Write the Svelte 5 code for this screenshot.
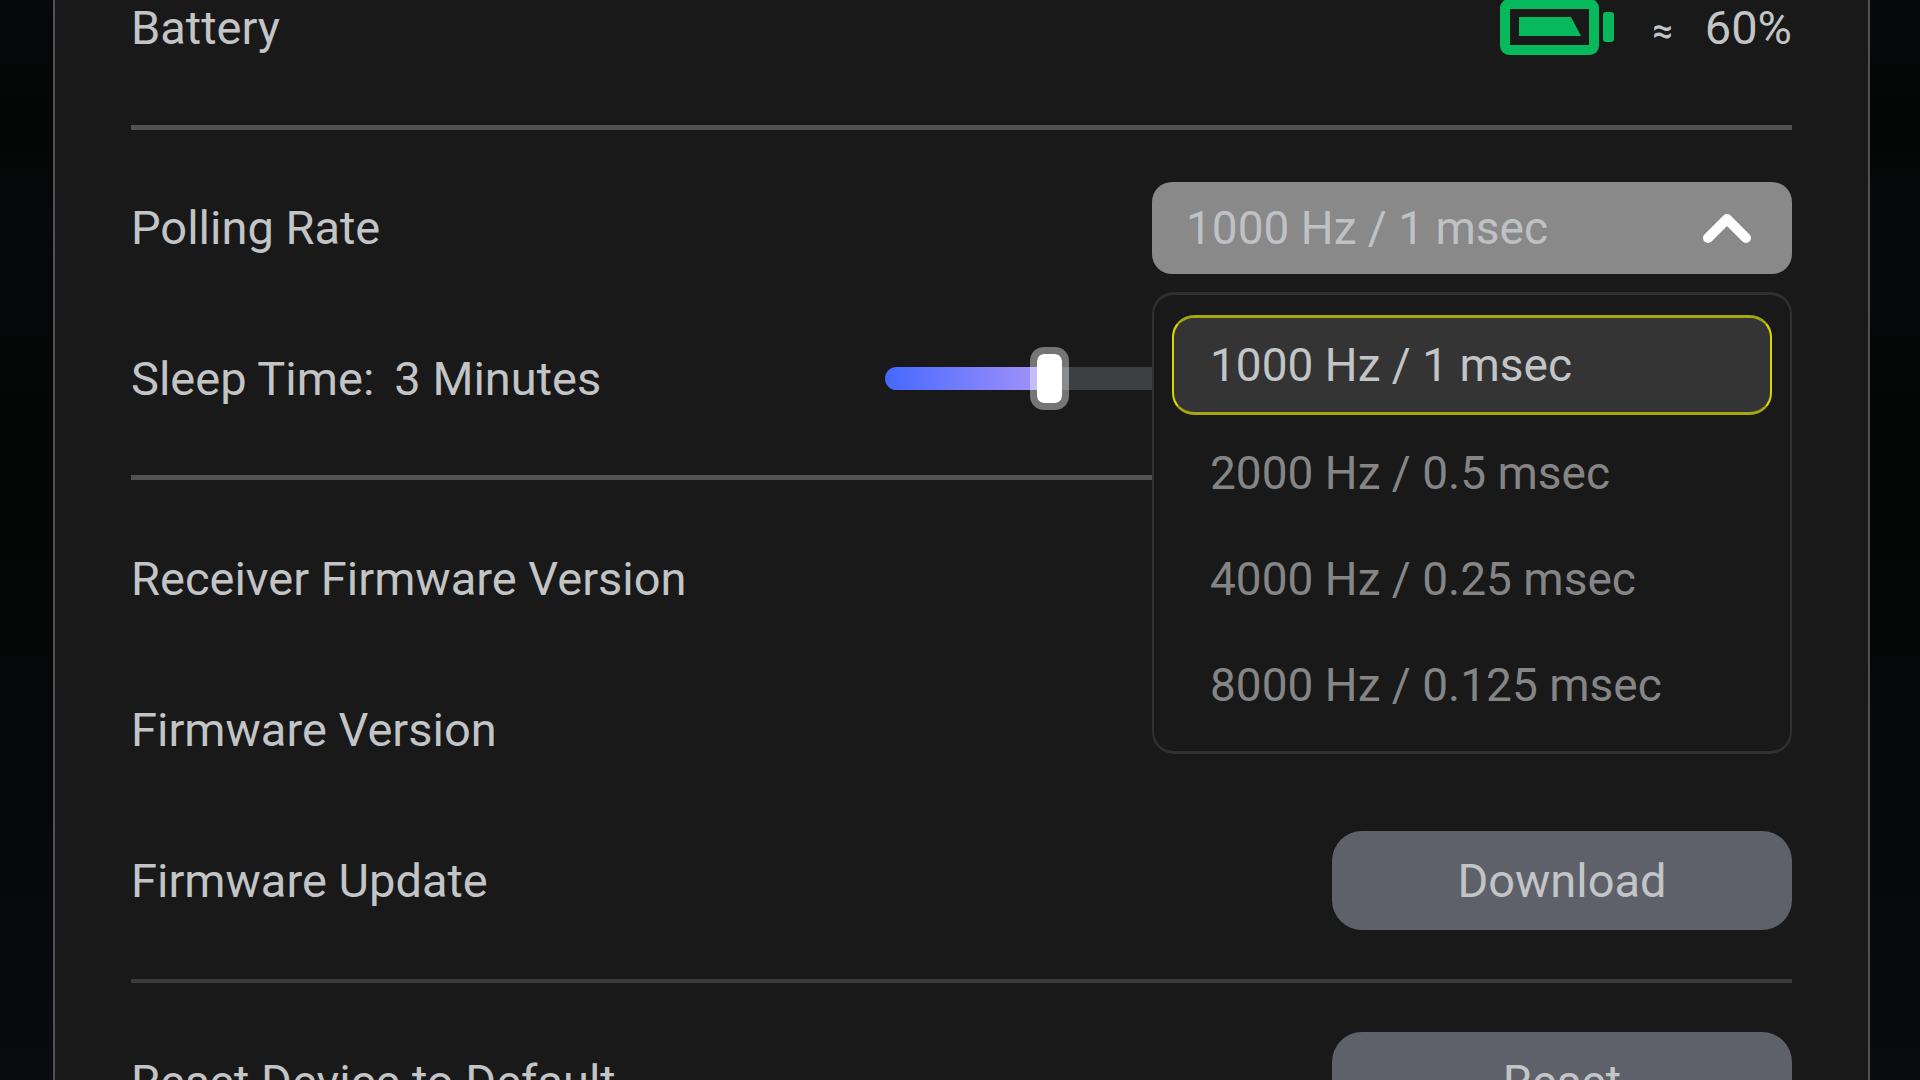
<script lang="ts">
	const pollingRates = [
		{ value: 1000, label: '1000 Hz / 1 msec' },
		{ value: 2000, label: '2000 Hz / 0.5 msec' },
		{ value: 4000, label: '4000 Hz / 0.25 msec' },
		{ value: 8000, label: '8000 Hz / 0.125 msec' }
	];

	const SLEEP_MIN = 1;
	const SLEEP_MAX = 13;
	const THUMB_WIDTH = 39;

	let batteryLevel = $state(60);
	let pollingRate = $state(1000);
	let menuOpen = $state(true);
	let sleepMinutes = $state(3);

	// the filled part of the track ends under the middle of the thumb
	let sleepRatio = $derived((sleepMinutes - SLEEP_MIN) / (SLEEP_MAX - SLEEP_MIN));
	let sleepFill = $derived(
		`calc(${THUMB_WIDTH / 2}px + (100% - ${THUMB_WIDTH}px) * ${sleepRatio})`
	);

	function toggleMenu(event: MouseEvent) {
		event.preventDefault();
		menuOpen = !menuOpen;
	}

	function chooseRate(value: number) {
		pollingRate = value;
		menuOpen = false;
	}
</script>

<div class="page">
	<main class="panel">
		<section class="first">
			<div class="row">
				<span>Battery</span>
				<div class="battery">
					<svg width="114" height="57" viewBox="0 0 114 57" aria-hidden="true">
						<rect x="5" y="5" width="89" height="46" rx="4" fill="none" stroke="#05b95c" stroke-width="10" />
						<path d="M19 18H71L81 37H19Z" fill="#05b95c" />
						<rect x="103" y="13" width="11" height="30" rx="3" fill="#05b95c" />
					</svg>
					<span class="approx">≈</span>
					<span>{batteryLevel}%</span>
				</div>
			</div>
		</section>

		<hr />

		<section class="power">
			<div class="row">
				<label for="pollingRate">Polling Rate</label>
				<div class="dropdown">
					<select id="pollingRate" bind:value={pollingRate} onmousedown={toggleMenu}>
						{#each pollingRates as rate}
							<option value={rate.value}>{rate.label}</option>
						{/each}
					</select>
					<svg class="chevron" class:closed={!menuOpen} width="50" height="30" viewBox="0 0 50 30" aria-hidden="true">
						<path d="M6 25L25 6L44 25" fill="none" stroke="#fff" stroke-width="10" stroke-linecap="round" stroke-linejoin="round" />
					</svg>
					{#if menuOpen}
						<div class="menu" role="listbox" aria-label="Polling Rate">
							{#each pollingRates as rate}
								<button
									type="button"
									role="option"
									class="choice"
									class:selected={rate.value === pollingRate}
									aria-selected={rate.value === pollingRate}
									onclick={() => chooseRate(rate.value)}
								>
									{rate.label}
								</button>
							{/each}
						</div>
					{/if}
				</div>
			</div>
			<div class="row">
				<label class="sleep" for="sleepTime">
					<span>Sleep Time:</span>
					<span>{sleepMinutes} Minutes</span>
				</label>
				<input
					type="range"
					id="sleepTime"
					min={SLEEP_MIN}
					max={SLEEP_MAX}
					bind:value={sleepMinutes}
					style="--fill: {sleepFill}"
				/>
			</div>
		</section>

		<hr />

		<section>
			<div class="row">
				<span>Receiver Firmware Version</span>
			</div>
			<div class="row">
				<span>Firmware Version</span>
			</div>
			<div class="row">
				<span>Firmware Update</span>
				<button type="button" class="action">Download</button>
			</div>
		</section>

		<hr class="dim" />

		<section>
			<div class="row">
				<span>Reset Device to Default</span>
				<button type="button" class="action">Reset</button>
			</div>
		</section>
	</main>
</div>

<style>
	:global(body) {
		margin: 0;
		background: #07090b;
	}

	.page {
		box-sizing: border-box;
		height: 100vh;
		padding: 0 50px 0 53px;
		overflow: hidden;
		background: linear-gradient(#06080a, #040605 12%, #06080a 20%, #040605 42%, #06080a 80%, #090b0e);
		color: #c2c4c6;
		font-family: Roboto, 'Liberation Sans', sans-serif;
		font-size: 47px;
		line-height: 52px;
	}

	.panel {
		min-height: 100vh;
		padding: 0 76px;
		border: solid #505152;
		border-width: 0 2px;
		background: #191919;
	}

	section {
		padding: 23px 0;
	}

	section.first {
		padding: 0 0 70px;
	}

	section.power {
		padding: 22px 0 21px;
	}

	.row {
		display: flex;
		align-items: center;
		justify-content: space-between;
		height: 151px;
	}

	.first .row {
		height: 55px;
	}

	hr {
		height: 5px;
		margin: 0;
		border: 0;
		background: #525252;
	}

	hr.dim {
		height: 4px;
		background: #3c3c3c;
	}

	.battery {
		display: flex;
		align-items: center;
	}

	.approx {
		margin: 6px 32px 0 38px;
		font-size: 36px;
		font-weight: 500;
	}

	.dropdown {
		position: relative;
		width: 640px;
	}

	select {
		display: block;
		width: 100%;
		height: 92px;
		padding: 0 100px 0 34px;
		border: 0;
		border-radius: 20px;
		outline: none;
		appearance: none;
		background: #898989;
		color: #bfc2c4;
		font: inherit;
		font-size: 46px;
	}

	.chevron {
		position: absolute;
		top: 31px;
		right: 40px;
		pointer-events: none;
	}

	.chevron.closed {
		transform: rotate(180deg);
	}

	.menu {
		position: absolute;
		z-index: 1;
		top: calc(100% + 18px);
		left: 0;
		right: 0;
		padding: 20px 18px 13px;
		border: 2px solid #303030;
		border-width: 3px 2px;
		border-radius: 22px;
		background: #191919;
	}

	.choice {
		display: block;
		box-sizing: border-box;
		width: 100%;
		height: 106px;
		padding: 0 36px;
		border: 2px solid transparent;
		border-radius: 22px;
		background: none;
		color: #858585;
		font: inherit;
		font-size: 46px;
		text-align: left;
	}

	.choice.selected {
		height: 100px;
		margin-bottom: 5px;
		border-color: #a8a710 #d6d600;
		border-width: 3px 2px;
		background: #343434;
		color: #c2c4c6;
	}

	.sleep {
		display: flex;
		gap: 20px;
	}

	input[type='range'] {
		width: 907px;
		height: 63px;
		margin: 0;
		appearance: none;
		background: none;
	}

	input[type='range']::-webkit-slider-runnable-track {
		height: 23px;
		border-radius: 12px;
		background:
			linear-gradient(90deg, #4668ff, #a795fa) 0 0 / var(--fill) 100% no-repeat,
			#3c4043;
	}

	input[type='range']::-webkit-slider-thumb {
		box-sizing: border-box;
		width: 39px;
		height: 63px;
		margin-top: -20px;
		border: 7px solid rgba(255, 255, 255, 0.4);
		border-radius: 14px;
		appearance: none;
		background: #fff;
		background-clip: padding-box;
	}

	.action {
		width: 460px;
		height: 99px;
		padding: 0;
		border: 0;
		border-radius: 30px;
		background: #5f616a;
		color: #c2c4c6;
		font: inherit;
	}
</style>
